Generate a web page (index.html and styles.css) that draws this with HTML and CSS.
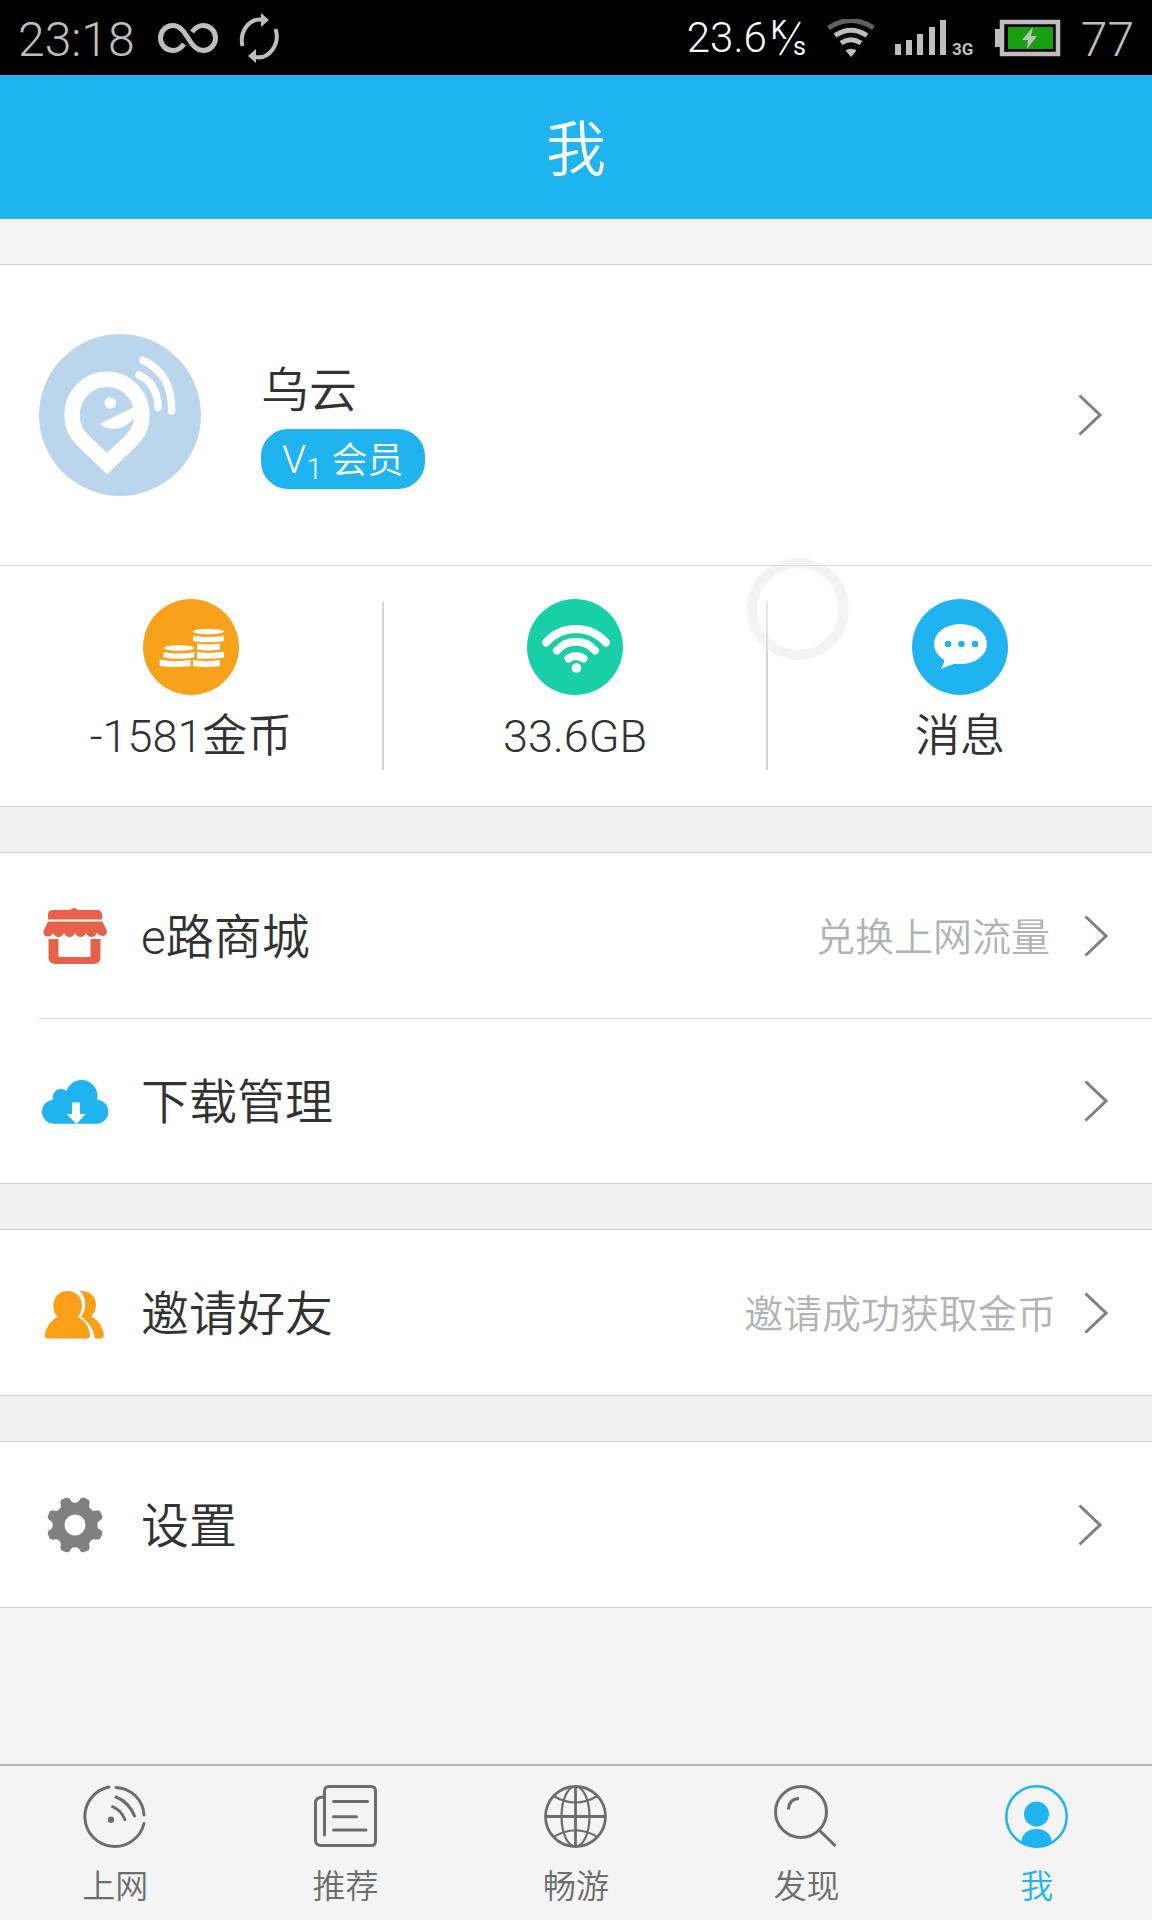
FILE: index.html
```html
<!DOCTYPE html>
<html lang="zh-CN">
<head>
<meta charset="utf-8">
<meta name="viewport" content="width=device-width, initial-scale=1">
<title>我</title>
<link rel="stylesheet" href="styles.css">
</head>
<body>
<svg width="0" height="0" hidden>
  <symbol id="chevron" viewBox="0 0 24 42"><path d="M1.5 1.500L22 21L1.500 40.500" fill="none" stroke="#808080" stroke-width="3"/></symbol>
</svg>
<div class="page">
  <div class="status">
    <span class="status-clock">23:18</span>
    <svg class="icon-infinity" width="60" height="30" viewBox="0 0 60 30" fill="none" stroke="#bebebe" stroke-width="5">
      <path d="M26 21C23 25 20 27.500 15 27.500C8 27.500 2.500 22 2.500 15S8 2.500 15 2.500C29 2.500 31 27.500 45 27.500C52 27.500 57.500 22 57.500 15S52 2.500 45 2.500C40 2.500 37 5 34 9"/>
    </svg>
    <svg class="icon-sync" width="42" height="50" viewBox="0 0 42 50">
      <path d="M4.500 33A18.500 21 0 0 1 24 6.500" fill="none" stroke="#bebebe" stroke-width="4"/>
      <path d="M37.500 16A18.500 21 0 0 1 17 44" fill="none" stroke="#bebebe" stroke-width="4"/>
      <path d="M23 0l8 7-8 7zM18 36l-8 7 8 7z" fill="#bebebe"/>
    </svg>
    <span class="status-speed"><span>23.6</span><svg width="38" height="54" viewBox="0 -10 38 54" fill="#fff">
      <text class="speed-unit" x="2" y="18">K</text>
      <path d="M31 1L11 34" stroke="#fff" stroke-width="2"/>
      <text class="speed-unit" x="24" y="34">s</text></svg></span>
    <svg width="48" height="38" viewBox="0 0 48 38">
      <path d="M1.500 9Q24-6 46.500 9" fill="none" stroke="#606060" stroke-width="5"/>
      <g fill="none" stroke="#bebebe" stroke-width="5"><path d="M8 16.500Q24 6 40 16.500M14 24Q24 17.500 34 24"/></g>
      <path d="M18.500 31.500Q24 28 29.500 31.500L24 38z" fill="#bebebe"/>
    </svg>
    <svg width="80" height="46" viewBox="0 -4 80 46" fill="#bebebe">
      <path d="M0 25h6v11H0zM11 21h6v15h-6zM22 15h6v21h-6zM34 8h6v28h-6zM45 1h6v35h-6z"/>
      <text class="net-type" x="57" y="36">3G</text>
    </svg>
    <svg width="66" height="38" viewBox="0 0 66 38">
      <path d="M0 10h5v18H0z" fill="#bebebe"/>
      <rect x="7" y="3" width="56" height="32" fill="none" stroke="#bebebe" stroke-width="4.500"/>
      <rect x="13" y="8" width="45" height="22" fill="#18a010"/>
      <path d="M38 8L27 21h6l-1 9 10-13h-6z" fill="#bebebe"/>
    </svg>
    <span class="status-level">77</span>
  </div>

  <header class="titlebar"><h1>我</h1></header>

  <main class="content">
    <section class="group account">
      <a class="profile" href="#profile">
        <svg class="avatar" width="162" height="162" viewBox="0 0 162 162">
          <circle cx="81" cy="81" r="81" fill="#bad5ec"/>
          <path d="M68 129.500L43.300 106A35 35.500 0 1 1 92.700 106Z" fill="none" stroke="#fff" stroke-width="15.500"/>
          <circle cx="71.300" cy="69" r="5.800" fill="#fff"/>
          <path d="M61.500 89.500L97 72l-1.500 11Q87 95.500 74 95Q64 94 61.500 89.500z" fill="#fff"/>
          <path d="M100 41Q119 50 119 73.500M104 26.500Q133 39 132.700 77" fill="none" stroke="#fff" stroke-width="7.500" stroke-linecap="round"/>
        </svg>
        <span class="identity">
          <span class="name">乌云</span>
          <span class="badge"><span class="badge-v">V</span><sub>1</sub> 会员</span>
        </span>
        <svg class="chevron" width="24" height="42"><use href="#chevron"/></svg>
      </a>
      <div class="stats">
        <a class="stat" href="#coins">
          <svg width="96" height="96" viewBox="0 0 96 96">
            <circle cx="48" cy="48" r="48" fill="#f8a11b"/>
            <g fill="#fff">
              <ellipse cx="65.500" cy="32.500" rx="15.300" ry="2.800"/>
              <path d="M50.200 36.500q15 3 30.500 0v5.500q-15 2.500-30.500 0zM54 44.500q12 2 23 0v6q-11 2-23 0zM54 53q14 2 27-.5v6q-13 2-27 1zM50 61q14 2 27 0v6q-13 2-27 0z"/>
              <ellipse cx="36" cy="49" rx="15.300" ry="2.800"/>
              <path d="M20.600 53q15 3 30.700 0v5.500q-15 2.500-30.700 0zM16.600 60.500q15 3 31 0.500v6q-15 2-31 0z"/>
            </g>
          </svg>
          <span>-1581金币</span>
        </a>
        <a class="stat" href="#traffic">
          <svg width="96" height="96" viewBox="0 0 96 96">
            <circle cx="48" cy="48" r="48" fill="#19cfa8"/>
            <path d="M19 43.500A40 40 0 0 1 79 43.500M30 51.500A25 25 0 0 1 68 51.500M41.500 59.500A13 13 0 0 1 56.500 59.500" fill="none" stroke="#fff" stroke-width="8" stroke-linecap="round"/>
            <circle cx="49.500" cy="69" r="4.800" fill="#fff"/>
          </svg>
          <span>33.6GB</span>
        </a>
        <a class="stat" href="#messages">
          <svg width="96" height="96" viewBox="0 0 96 96">
            <circle cx="48" cy="48" r="48" fill="#1fb3f0"/>
            <ellipse cx="48.500" cy="45" rx="26.500" ry="20" fill="#fff"/>
            <path d="M33 59q-1 6-4.500 11.500Q36 66 46 64z" fill="#fff"/>
            <g fill="#1fb3f0"><circle cx="36" cy="45" r="3.300"/><circle cx="49.500" cy="45" r="3.300"/><circle cx="63" cy="45" r="3.300"/></g>
          </svg>
          <span>消息</span>
        </a>
        <i class="touch"></i>
      </div>
    </section>

    <section class="group">
      <a class="row" href="#mall">
        <svg width="72" height="72" viewBox="0 0 72 72" fill="#e7604a">
          <path d="M9 19.500V15q0-5 5-5H31q4-4 8 0H58q5 0 5 5v4.500zM9 21.500H63.500L68 31q0 5-5 5-3 0-5-3-2 4-5.500 4T47 33q-2 4-5.500 4T36 33q-2 4-5.500 4T25 33q-2 4-5.500 4T14 33q-2 3.500-5 3.500-5 0-4.500-5.500z"/>
          <path d="M9.500 39h10v18h32V39h10v18q0 7-7 7h-38q-7 0-7-7z"/>
        </svg>
        <span class="label">e路商城</span>
        <span class="hint">兑换上网流量</span>
        <svg class="chevron" width="24" height="42"><use href="#chevron"/></svg>
      </a>
      <a class="row" href="#downloads">
        <svg width="72" height="72" viewBox="0 0 72 72" fill="#1fb3f0">
          <circle cx="42.500" cy="31" r="16"/><circle cx="22" cy="32.500" r="8.500"/><circle cx="15" cy="46.700" r="12"/><circle cx="57.300" cy="46.700" r="12"/>
          <path d="M14 35L22 30H58V40L57.300 58.700H15z"/>
          <path d="M33 37.500h8V49h5.500l-9 10-10-10H33z" fill="#fff"/>
        </svg>
        <span class="label">下载管理</span>
        <svg class="chevron" width="24" height="42"><use href="#chevron"/></svg>
      </a>
    </section>

    <section class="group">
      <a class="row row-invite" href="#invite">
        <svg width="72" height="72" viewBox="0 0 72 72" fill="#fb9e18">
          <path d="M28.700 14c8 0 14.300 6 14.300 14.500 0 5-1.500 9-4.500 11.500C46 43 50 50 51 57.500q.5 4-3 4H9q-3.500 0-3-4C7.500 50 11.500 43 18.800 40 16 37.500 14.300 34 14.300 28.500c0-8.500 6.400-14.500 14.400-14.500z"/>
          <path d="M41 14C50 13 57 19 57 28c0 5-2 9-5 11.500 7 3 11.500 10 12.700 17.500q.5 4.500-3 4.500H56C55 53 50 45 42 39.500 48 33 47.500 21 41 14z"/>
        </svg>
        <span class="label">邀请好友</span>
        <span class="hint">邀请成功获取金币</span>
        <svg class="chevron" width="24" height="42"><use href="#chevron"/></svg>
      </a>
    </section>

    <section class="group">
      <a class="row row-settings" href="#settings">
        <svg width="72" height="72" viewBox="0 0 72 72" fill="#808080">
          <defs><path id="teeth" d="M27.500 17Q31 13 31 9.500l2-2h6l2 2Q41 13 44.500 17zM27.500 55Q31 59 31 62.500l2 2h6l2-2Q41 59 44.500 55z"/></defs>
          <circle cx="36" cy="36" r="16.500" fill="none" stroke="#808080" stroke-width="12"/>
          <use href="#teeth" transform="rotate(22.500 36 36)"/><use href="#teeth" transform="rotate(67.500 36 36)"/><use href="#teeth" transform="rotate(112.500 36 36)"/><use href="#teeth" transform="rotate(157.500 36 36)"/>
        </svg>
        <span class="label">设置</span>
        <svg class="chevron" width="24" height="42"><use href="#chevron"/></svg>
      </a>
    </section>
  </main>

  <nav class="tabs">
    <a class="tab" href="#online">
      <svg width="64" height="64" viewBox="0 0 64 64" fill="none" stroke="currentColor" stroke-width="3" stroke-linecap="round">
        <path d="M26 2A30 30 0 1 0 61 38.500M33 2.500A29 29 0 0 1 61 30M33 12Q46 17 51.500 31M29.500 21.700Q38 25 42 34.700"/><circle cx="28" cy="34.700" r="3.200" fill="currentColor" stroke="none"/>
      </svg>
      <span>上网</span>
    </a>
    <a class="tab" href="#picks">
      <svg width="64" height="64" viewBox="0 0 64 64" fill="none" stroke="currentColor" stroke-width="3" stroke-linecap="round">
        <path d="M10.500 50V6q0-4.500 4.500-4.500h42q4.500 0 4.500 4.500v50q0 4.500-4.500 4.500H7q-5.500 0-5.500-5.500V18q0-6 8-6M19.500 16.500h34M19.500 31.700H42.500M19.500 45H52"/>
      </svg>
      <span>推荐</span>
    </a>
    <a class="tab" href="#surf">
      <svg width="64" height="64" viewBox="0 0 64 64" fill="none" stroke="currentColor" stroke-width="2.800">
        <circle cx="31.500" cy="31.500" r="30"/><ellipse cx="31.500" cy="31.500" rx="14" ry="30" stroke-width="2.200"/><path d="M31.500 1v61M1 31.500h61"/><path d="M9.500 11Q31.500 24 53.500 11M9.500 52Q31.500 38.500 53.500 52" stroke-width="2.200"/>
      </svg>
      <span>畅游</span>
    </a>
    <a class="tab" href="#discover">
      <svg width="64" height="64" viewBox="0 0 64 64" fill="none" stroke="currentColor" stroke-width="3">
        <circle cx="27" cy="27" r="25.500"/><path d="M45 45L61.500 61M14.500 24.500Q15 14 25 13.500"/>
      </svg>
      <span>发现</span>
    </a>
    <a class="tab tab-active" href="#me" aria-current="page">
      <svg width="64" height="64" viewBox="0 0 64 64" fill="currentColor">
        <circle cx="31.500" cy="31.500" r="30.200" fill="none" stroke="currentColor" stroke-width="2.500"/><circle cx="31.500" cy="29" r="12.500"/>
        <path d="M16 57.500Q18 44 31.500 44T47 57.500Q40 62.500 31.500 62.500T16 57.500z"/>
      </svg>
      <span>我</span>
    </a>
  </nav>
</div>
</body>
</html>
```
FILE: styles.css
```css
* {
  box-sizing: border-box;
}

body {
  margin: 0;
  background: #f4f4f4;
  color: #323232;
  font-family: Roboto, "Noto Sans CJK SC", sans-serif;
  font-weight: 350;
}

a {
  color: inherit;
  text-decoration: none;
}

svg {
  display: block;
  flex: none;
}

.page {
  display: flex;
  flex-direction: column;
  min-height: 100vh;
}

/* Status bar */
.status {
  display: flex;
  align-items: center;
  gap: 20px;
  height: 75px;
  padding: 0 18px;
  background: #000;
  color: #bebebe;
  font-weight: 300;
}

.status-clock,
.status-level {
  padding-top: 4px;
  font-size: 48px;
  line-height: 60px;
}

.status-clock {
  margin-right: 3px;
}

.status-speed {
  display: flex;
  align-items: center;
  gap: 2px;
  margin-left: auto;
  color: #fff;
  font-size: 42px;
  line-height: 60px;
}

.speed-unit {
  font-size: 25px;
  font-weight: 400;
}

.net-type {
  font-size: 17px;
  font-weight: 700;
}

/* Title bar */
.titlebar {
  height: 144px;
  padding-top: 8px;
  background: #1fb3f0;
  color: #fff;
  text-align: center;
}

.titlebar h1 {
  margin: 0;
  font-size: 60px;
  font-weight: 350;
  line-height: 136px;
}

/* Grouped lists */
.content {
  display: flex;
  flex-direction: column;
  gap: 45px;
  margin-top: 45px;
  background: #f1f1f1;
}

.group {
  border: solid #d5d5d5;
  border-width: 1px 0;
  background: #fff;
}

.profile {
  display: flex;
  align-items: center;
  height: 300px;
  padding: 0 50px 0 39px;
}

.identity {
  display: flex;
  flex-direction: column;
  align-items: flex-start;
  gap: 6px;
  margin-left: 60px;
  padding-top: 10px;
}

.name {
  padding-top: 8px;
  font-size: 48px;
  line-height: 64px;
}

.badge {
  height: 60px;
  padding: 0 21px;
  border-radius: 27px;
  background: #1fb3f0;
  color: #fff;
  font-size: 36px;
  line-height: 64px;
}

.badge-v {
  font-size: 39px;
  line-height: 0;
}

.badge sub {
  font-size: 30px;
  line-height: 0;
  vertical-align: -6px;
}

.chevron {
  margin-left: auto;
}

.stats {
  position: relative;
  display: grid;
  grid-template-columns: repeat(3, 1fr);
  height: 241px;
  border-top: 1px solid #d5d5d5;
}

.stat {
  display: flex;
  flex-direction: column;
  align-items: center;
  gap: 12px;
  padding-top: 33px;
  font-size: 45px;
  line-height: 60px;
}

.stat:not(:nth-child(3)) {
  padding-right: 2px;
  background: linear-gradient(#d5d5d5, #d5d5d5) right 36px / 2px 168px no-repeat;
}

.touch {
  position: absolute;
  top: -8px;
  left: 747px;
  width: 102px;
  height: 102px;
  border: 10px solid rgba(232, 232, 232, 0.5);
  border-radius: 50%;
  background: rgba(255, 255, 255, 0.4);
  background-clip: padding-box;
}

.row {
  display: flex;
  align-items: center;
  height: 165px;
  padding: 0 44px 0 39px;
}

.row + .row {
  margin-left: 39px;
  padding-left: 0;
  border-top: 1px solid #d5d5d5;
}

.label {
  margin-left: 30px;
  padding-top: 4px;
  font-size: 48px;
  line-height: 72px;
}

.hint {
  margin-left: auto;
  padding-top: 4px;
  color: #b3b3b3;
  font-size: 39px;
  line-height: 60px;
}

.hint + .chevron {
  margin-left: 34px;
}

.row-invite .hint + .chevron {
  margin-left: 28px;
}

.row-settings {
  padding-right: 50px;
}

/* Bottom tabs */
.tabs {
  display: flex;
  height: 156px;
  margin-top: auto;
  border-top: 2px solid #b8b8b8;
  color: #6d6d6d;
}

.tab {
  display: flex;
  flex: 1;
  flex-direction: column;
  align-items: center;
  gap: 14px;
  padding-top: 19px;
  font-size: 33px;
  line-height: 48px;
}

.tab-active {
  color: #1fb3f0;
}
```
